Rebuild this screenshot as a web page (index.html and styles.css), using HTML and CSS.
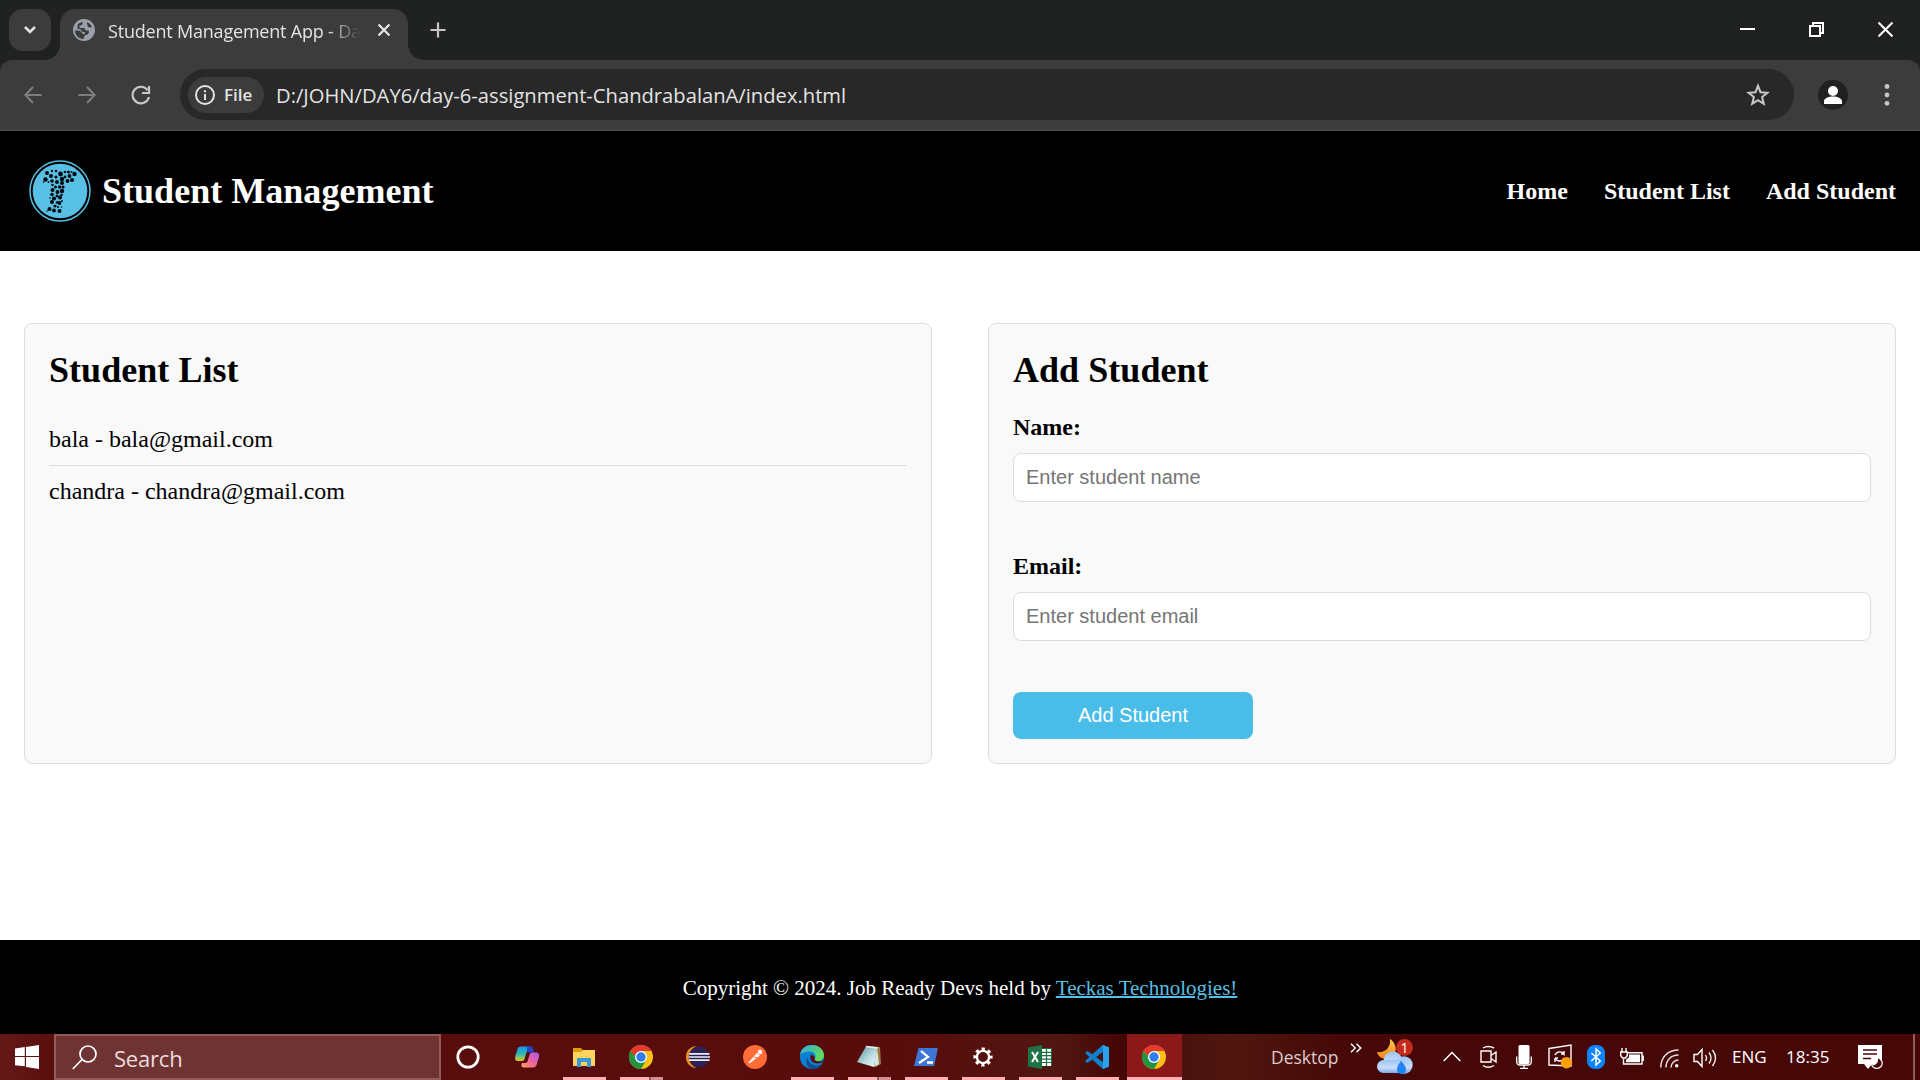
FILE: index.html
```
<!DOCTYPE html>
<html lang="en">
<head>
<meta charset="utf-8">
<title>Student Management App</title>
<link rel="stylesheet" href="styles.css">
</head>
<body>
<svg class="defs" aria-hidden="true">
  <defs>
    <symbol id="chrome" viewBox="0 0 24 24">
      <circle cx="12" cy="12" r="12" fill="#fbc116"/>
      <path d="M12 12 1.6 6A12 12 0 0 1 22.4 6H12Z" fill="#e33b2e"/>
      <path d="M1.6 6A12 12 0 0 0 12 24L17.2 15 6.8 15Z" fill="#229342"/>
      <path d="M1.6 6 6.8 15 12 12V6Z" fill="#229342"/>
      <path d="M1.6 6A12 12 0 0 1 22.4 6H12A6 6 0 0 0 6.3 10.5L4 9.2Z" fill="#e33b2e"/>
      <circle cx="12" cy="12" r="6" fill="#fff"/><circle cx="12" cy="12" r="4.7" fill="#2f7cf0"/>
    </symbol>
    <linearGradient id="copA" x1="0" y1="0" x2="0" y2="1"><stop offset="0" stop-color="#1a93ee"/><stop offset=".5" stop-color="#28b8b0"/><stop offset="1" stop-color="#e8c728"/></linearGradient>
    <linearGradient id="copB" x1="1" y1="0" x2="0" y2="1"><stop offset="0" stop-color="#a05df0"/><stop offset=".5" stop-color="#ee609e"/><stop offset="1" stop-color="#ffa45c"/></linearGradient>
    <linearGradient id="edgeA" x1="0" y1="0" x2="1" y2=".5"><stop offset="0" stop-color="#2fa9e6"/><stop offset="1" stop-color="#61dc56"/></linearGradient>
    <linearGradient id="cloud" x1="0" y1="0" x2="0" y2="1"><stop offset="0" stop-color="#9cc5fa"/><stop offset=".6" stop-color="#c9dcf6"/><stop offset="1" stop-color="#7fa9ec"/></linearGradient>
    <linearGradient id="moon" x1="0" y1="0" x2="0" y2="1"><stop offset="0" stop-color="#ffc94a"/><stop offset="1" stop-color="#ef8418"/></linearGradient>
    <linearGradient id="note" x1="0" y1="0" x2="1" y2="1"><stop offset="0" stop-color="#4e8d98"/><stop offset=".6" stop-color="#bfe0e4"/><stop offset="1" stop-color="#eef7f7"/></linearGradient>
  </defs>
</svg>

<div class="screen">
  <div class="tabstrip">
    <div class="tab-search"><svg width="14" height="10" viewBox="0 0 14 10"><path d="M2 2l5 5 5-5" fill="none" stroke="#e3e3e3" stroke-width="2.6"/></svg></div>
    <div class="tab">
      <svg class="globe" width="22" height="22" viewBox="0 0 22 22"><circle cx="11" cy="11" r="11" fill="#9aa0a9"/><path d="M10 3.500C9.500 6 8 6.500 6.500 6.500V9h4c1.500 0 2 1 1.800 2.500h3.500c.6 3-1 4.500-3.300 4.500-1 0-1 1.500-2 4C5.500 20 2 16 2 11.500c2 0 4.500 0 5.500.8 1.500 1 1 2.700 3.500 2.700 1.500 0 1-1.500.5-2H9.500L7 10H4.500V6C6 4 8 3 10 3.500ZM14 3c2.500 1 4.500 3 5 5.500-1.500-.8-3 .3-4-.5s.2-2-1-3Z" fill="#3c3c3c"/></svg>
      <span class="tab-title">Student Management App - Day</span>
      <svg width="14" height="14" viewBox="0 0 14 14"><path d="M1.500 1.500l11 11M12.500 1.500l-11 11" stroke="#e3e3e3" stroke-width="2.300"/></svg>
    </div>
    <svg class="new-tab" width="16" height="16" viewBox="0 0 16 16"><path d="M8 .5v15M.5 8h15" stroke="#c7c7c7" stroke-width="2.200"/></svg>
    <div class="window-buttons">
      <svg width="15" height="15" viewBox="0 0 15 15"><path d="M0 7h15" stroke="#fff" stroke-width="2"/></svg>
      <svg width="15" height="15" viewBox="0 0 15 15"><path d="M1 4h10v10H1ZM4 4V1h10v10h-3" fill="none" stroke="#fff" stroke-width="2"/></svg>
      <svg width="15" height="15" viewBox="0 0 15 15"><path d="M.5 .5l14 14M14.500 .5l-14 14" stroke="#fff" stroke-width="2"/></svg>
    </div>
  </div>

  <div class="toolbar">
    <svg width="18" height="18" viewBox="0 0 18 18"><path d="M17.500 9H1.500M9 1L1.300 9 9 17" fill="none" stroke="#7f7f7f" stroke-width="2"/></svg>
    <svg width="18" height="18" viewBox="0 0 18 18"><path d="M.5 9h16M9 1l7.700 8L9 17" fill="none" stroke="#7f7f7f" stroke-width="2"/></svg>
    <svg width="20" height="20" viewBox="0 0 20 20"><path d="M16.500 5A8.300 8.300 0 1 0 18 12" fill="none" stroke="#c7c7c7" stroke-width="2.200"/><path d="M18 1v7h-7" fill="none" stroke="#c7c7c7" stroke-width="2.200"/></svg>
    <div class="omnibox">
      <div class="chip"><svg width="20" height="20" viewBox="0 0 20 20"><circle cx="10" cy="10" r="9" fill="none" stroke="#e3e3e3" stroke-width="2"/><path d="M10 9v6M10 5.200v2" stroke="#e3e3e3" stroke-width="2"/></svg><span>File</span></div>
      <span class="url">D:/JOHN/DAY6/day-6-assignment-ChandrabalanA/index.html</span>
      <svg class="star" width="24" height="24" viewBox="0 0 24 24"><path d="M12 2.800l2.500 6.400 6.900 .5-5.300 4.400 1.700 6.800L12 17.200l-5.800 3.700 1.700-6.800L2.600 9.700l6.900-.5Z" fill="none" stroke="#c7c7c7" stroke-width="2"/></svg>
    </div>
    <svg class="profile" width="30" height="30" viewBox="0 0 30 30"><circle cx="15" cy="15" r="15" fill="#1f2120"/><circle cx="15" cy="11" r="5" fill="#fff"/><path d="M6 24v-2.500c0-3.500 4.500-5 9-5s9 1.500 9 5V24Z" fill="#fff"/></svg>
    <svg width="6" height="22" viewBox="0 0 6 22"><g fill="#c7c7c7"><circle cx="3" cy="2.500" r="2.400"/><circle cx="3" cy="11" r="2.400"/><circle cx="3" cy="19.300" r="2.400"/></g></svg>
  </div>

  <header class="site-header">
    <svg class="logo" width="62" height="62" viewBox="0 0 62 62">
      <circle cx="31" cy="31" r="30" fill="none" stroke="#58bfe5" stroke-width="1.500"/><circle cx="31" cy="31" r="27.300" fill="#58bfe5"/>
      <g fill="#05090c"><circle cx="18" cy="13" r="2"/><circle cx="23" cy="11" r="1.200"/><circle cx="27" cy="11" r="1.300"/><circle cx="31.500" cy="14" r="2.400"/><circle cx="36" cy="12" r="1.300"/><circle cx="39.500" cy="12" r="1.500"/><circle cx="42.500" cy="12" r="1"/><circle cx="45.500" cy="14" r="2.200"/><circle cx="22" cy="16" r="2"/><circle cx="16.500" cy="19.500" r="2.200"/><circle cx="27" cy="17" r="1.600"/><circle cx="36" cy="17" r="1.400"/><circle cx="40.500" cy="16" r="1.900"/><circle cx="43" cy="20" r="2"/><circle cx="38.500" cy="21" r="2"/><circle cx="33" cy="19" r="2.200"/><circle cx="23" cy="21" r="1.800"/><circle cx="28" cy="22" r="2"/><circle cx="33" cy="23" r="2"/><circle cx="14.500" cy="22" r=".8"/><circle cx="19.500" cy="22" r=".9"/><circle cx="23.500" cy="25" r="1.300"/><circle cx="26.500" cy="27" r="1.500"/><circle cx="30.500" cy="27" r="1.700"/><circle cx="34" cy="27" r="1.600"/><circle cx="23.500" cy="30" r="2"/><circle cx="28.500" cy="32" r="2"/><circle cx="33" cy="31" r="2.200"/><circle cx="23" cy="34.500" r="1.800"/><circle cx="28" cy="36" r="1.400"/><circle cx="32.500" cy="35" r="1.300"/><circle cx="25" cy="38.500" r="2.100"/><circle cx="31" cy="37.500" r="2"/><circle cx="21" cy="38" r=".8"/><circle cx="23" cy="42" r="2"/><circle cx="28" cy="42.500" r="1.300"/><circle cx="30.500" cy="43" r="1.900"/><circle cx="33" cy="41" r=".9"/><circle cx="26" cy="46" r="1.600"/><circle cx="20.500" cy="49" r="2"/><circle cx="25" cy="50.500" r="1.900"/><circle cx="30.500" cy="51" r="2"/><circle cx="29" cy="47" r="1.100"/><circle cx="32.500" cy="47" r=".7"/><circle cx="18" cy="51" r=".8"/></g>
    </svg>
    <h1>Student Management</h1>
    <nav><a>Home</a><a>Student List</a><a>Add Student</a></nav>
  </header>

  <main class="content">
    <section class="card">
      <h2>Student List</h2>
      <ul class="students"><li>bala - bala@gmail.com</li><li>chandra - chandra@gmail.com</li></ul>
    </section>
    <section class="card">
      <h2>Add Student</h2>
      <form>
        <label for="name">Name:</label><input id="name" type="text" placeholder="Enter student name">
        <label for="email">Email:</label><input id="email" type="email" placeholder="Enter student email">
        <button type="button">Add Student</button>
      </form>
    </section>
  </main>

  <footer class="site-footer"><p>Copyright © 2024. Job Ready Devs held by <a>Teckas Technologies!</a></p></footer>

  <div class="taskbar">
    <div class="start"><svg width="24" height="24" viewBox="0 0 24 24"><path d="M0 3.400l9.800-1.300V11H0ZM11 1.900L24 0v11H11ZM0 12h9.800v9.300L0 20.200ZM11 12h13v12l-13-2Z" fill="#fff"/></svg></div>
    <div class="search"><svg width="25" height="25" viewBox="0 0 25 25"><circle cx="16" cy="9" r="8" fill="none" stroke="#fff" stroke-width="1.700"/><path d="M10 14.500L.8 24" stroke="#fff" stroke-width="1.700"/></svg><span>Search</span></div>
    <div class="apps">
      <div class="app"><svg width="24" height="24" viewBox="0 0 24 24"><circle cx="12" cy="12" r="10.200" fill="none" stroke="#fff" stroke-width="2.800"/></svg></div>
      <div class="app"><svg width="26" height="24" viewBox="0 0 26 24"><path d="M7 1.500h9c2 0 3 1 2.500 3L18 6h-3c-2 0-2.500 1-3 3l-1.500 5c-.5 1.500-1.500 2-3 2H4C1 16 .7 13.500 1.400 11L3.500 4c.5-1.500 1.500-2.500 3.500-2.500Z" fill="url(#copA)"/><path d="M13 1.500h3c2 0 2.800 1 3.200 3l.8 3h-5c-2 0-2-1-2-2Z" fill="#2145c7"/><path d="M19 22.500h-9c-2 0-3-1-2.500-3L8 18h3c2 0 2.500-1 3-3l1.500-5C16 8.500 17 7.500 18.500 7.500H22c3 0 3.600 2.500 2.900 5L22.500 20c-.5 1.500-1.500 2.500-3.500 2.500Z" fill="url(#copB)"/></svg></div>
      <div class="app open"><svg width="24" height="24" viewBox="0 0 24 24"><path d="M1 3h8l2 2.500V8H1Z" fill="#dd9c08"/><path d="M1 7h8l2-2h12v16H1Z" fill="#ffd45c"/><path d="M5 22v-9h14v9h-4v-5H9v5Z" fill="#3a97dc"/></svg></div>
      <div class="app open stacked"><svg width="24" height="24"><use href="#chrome"/></svg></div>
      <div class="app"><svg width="26" height="24" viewBox="0 0 26 24"><path d="M12 1C5 1 1 6 1 12s4 11 11 11C7 21 5 17 5 12S7 3 12 1Z" fill="#f19020"/><circle cx="14" cy="12" r="10.500" fill="#2c2255"/><path d="M4 8.800h20.500M3.500 12h21.500M4 15.200h20.500" stroke="#eceaf6" stroke-width="1.700"/></svg></div>
      <div class="app"><svg width="24" height="24" viewBox="0 0 24 24"><circle cx="12" cy="12" r="12" fill="#ff6c37"/><path d="M6 18l8-9 2 1.500Z" fill="#fff" stroke="#fff" stroke-width="1.300"/><path d="M11 12l3 1" stroke="#ff6c37"/><circle cx="17" cy="7" r="2.200" fill="#fff"/></svg></div>
      <div class="app open"><svg width="24" height="24" viewBox="0 0 24 24"><circle cx="12" cy="12" r="12" fill="#0b80d5"/><path d="M0 10C1 3 6 0 12 0c7 0 12 5 12 10.500 0 3.500-2.800 5.500-6 5.500-2.500 0-4-.7-3-2 2-4-1-7.500-5.500-7.500C5 6.500 1.500 8 0 10Z" fill="url(#edgeA)"/><path d="M8 12c-.5 5 3.500 8.500 8.500 8.500 2 0 4-.6 5.500-1.500-2.500 4-7 5.300-10.500 5C6 22.500 5 16 8 12Z" fill="#114f94"/><path d="M11.500 9.500c-2 2-1.700 7 3 8.500 3 .9 6 .2 8.700-1.300.5-.3.700 0 .5.600l-1.800 2.500 2.300-.5V15c-2 1.800-5.500 2-8 1-2.500-1-2-2-1.200-3.500Z" fill="#5a0c0c"/></svg></div>
      <div class="app open stacked"><svg width="26" height="24" viewBox="0 0 26 24"><path d="M12 1l12 1 1 17-5 3Z" fill="#987c46"/><path d="M10 1.500l11 1.500-3 19L1 17Z" fill="url(#note)"/><path d="M21 3l2 16-5 3Z" fill="#d9e7e4"/><path d="M10 1.500l12 1.500" stroke="#e8eeee" stroke-width="1.500"/></svg></div>
      <div class="app open"><svg width="24" height="24" viewBox="0 0 24 24"><path d="M4.500 3H24l-4 18H0Z" fill="#3d75d6"/><path d="M7 6l7 6-9 6M13 17.500h6" fill="none" stroke="#fff" stroke-width="2.300"/></svg></div>
      <div class="app open"><svg width="24" height="24" viewBox="0 0 24 24"><circle cx="12" cy="12" r="8" fill="none" stroke="#fff" stroke-width="3.200" stroke-dasharray="3.140" stroke-dashoffset="1.570"/><circle cx="12" cy="12" r="6.100" fill="none" stroke="#fff" stroke-width="2.400"/></svg></div>
      <div class="app open"><svg width="24" height="24" viewBox="0 0 24 24"><path d="M12 3h12v18H12Z" fill="#1c6b41"/><path d="M14 4h9v17h-9Z" fill="#fff"/><path d="M14 7.300h9M14 10.700h9M14 14.100h9M14 17.500h9M18.500 4v17" stroke="#1c6b41" stroke-width="1.200"/><path d="M0 2.500L14 0v24L0 21.500Z" fill="#1f7446"/><path d="M4 7l6 10M10 7L4 17" stroke="#fff" stroke-width="2"/></svg></div>
      <div class="app open"><svg width="24" height="24" viewBox="0 0 24 24"><path d="M18 0l6 2.500v19L18 24l-.8-.5L0 8l2-2 3.500 2L18 17V7L5.500 16 2 18l-2-2L17 .5Z" fill="#1180ca"/><path d="M18 0l6 2.500v19L18 24Z" fill="#29a3ec"/></svg></div>
      <div class="app active"><svg width="24" height="24"><use href="#chrome"/></svg></div>
    </div>
    <div class="tray">
      <span class="desktop">Desktop</span>
      <svg class="more" width="12" height="10" viewBox="0 0 12 10"><path d="M1 .8l4.200 4.200L1 9.200M6.500 .8L10.700 5 6.500 9.200" fill="none" stroke="#fff" stroke-width="1.500"/></svg>
      <div class="weather"><svg width="37" height="38" viewBox="0 0 37 38"><path d="M14 1c7 4 9 17-2 20C6 22 2 18 1 14c7 1 14-3 13-13Z" fill="url(#moon)"/><g fill="url(#cloud)"><circle cx="17" cy="23" r="9.500"/><circle cx="28" cy="27" r="8.700"/><rect x="1" y="22" width="32" height="13" rx="6.500"/></g><path d="M25 23c3 3 5 6 5 8.500 0 6-9 6-9 0 0-3 2-6 4-8.500Z" fill="#1b85f3"/></svg><b class="badge">1</b></div>
      <svg class="caret" width="18" height="11" viewBox="0 0 18 11"><path d="M.7 10L9 1.500l8.300 8.500" fill="none" stroke="#fff" stroke-width="1.500"/></svg>
      <svg class="meet" width="18" height="24" viewBox="0 0 18 24"><path d="M3 3Q8 0 14 3M3 20.500Q8 24 14 20.500M1 6h10v11H1ZM11 10.500l5-3.500v10l-5-3.500" fill="none" stroke="#fff" stroke-width="1.400"/></svg>
      <svg class="mic" width="16" height="24" viewBox="0 0 16 24"><rect x="2.500" width="11" height="19" rx="1.500" fill="#fff"/><path d="M.7 11.500v5c0 2 1.500 3.500 3.500 3.500h7.600c2 0 3.500-1.500 3.500-3.500v-5M8 20v3M4 23.300h8" fill="none" stroke="#fff" stroke-width="1.300"/></svg>
      <svg class="update" width="25" height="26" viewBox="0 0 25 26"><path d="M1 4.500L23 1v21L1 21Z" fill="none" stroke="#fff" stroke-width="1.400"/><path d="M7 11c2-4 7-4 9-1v-3M16 10h-3M16 14c-2 4-7 4-9 0v4M7 14h3" fill="none" stroke="#fff" stroke-width="1.400"/><circle cx="18.500" cy="18.800" r="5.700" fill="#ff9f0a"/></svg>
      <svg class="bluetooth" width="18" height="24" viewBox="0 0 18 24"><rect width="18" height="24" rx="8" fill="#0a84ff"/><path d="M4.300 8l9 8L9 20V4l4.300 4-9 8" fill="none" stroke="#fff" stroke-width="1.500"/></svg>
      <svg class="battery" width="24" height="17" viewBox="0 0 24 17"><path d="M8 4.700h14v11.300H3.500V11M23.200 7.500V13" fill="none" stroke="#fff" stroke-width="1.400"/><path d="M9 6.500h11v7.700H6v-2.500l3-2.500Z" fill="#fff"/><path d="M2 0v4M6 0v4M.7 4h6.600v3.500L5.500 10h-3L.7 7.500Z" fill="none" stroke="#fff" stroke-width="1.400"/></svg>
      <svg class="wifi" width="19" height="19" viewBox="0 0 19 19"><g fill="none" stroke="#e6dede" stroke-width="1.500"><path d="M.8 18.500C1 8 8 1 18.500 1"/><path d="M6 18.500C6 11 11 6 18.500 6"/><path d="M11 18.500c0-4 3.500-7.500 7.500-7.500"/></g><circle cx="16.700" cy="16.700" r="1.700" fill="#fff"/></svg>
      <svg class="volume" width="24" height="20" viewBox="0 0 24 20"><path d="M1 6.500h3.500L9 1.500v17l-4.500-5H1Z" fill="none" stroke="#fff" stroke-width="1.400"/><path d="M12.500 7q2 3 0 6M16 4.500q4 5.500 0 11M19.500 2q6 8 0 16" fill="none" stroke="#fff" stroke-width="1.300"/></svg>
      <span class="lang">ENG</span>
      <span class="clock">18:35</span>
      <svg class="notice" width="25" height="25" viewBox="0 0 25 25"><path d="M0 0h24v19H14l-4 5-4-5H0Z" fill="#fff"/><path d="M5 5h14M5 9h14M5 13.500h8" stroke="#470707" stroke-width="1.500"/><path d="M19 12.500c1.500 4.500-1 7.500-5.500 7.500 2 4 7 4.500 9.500 1.500s1-8-4-9Z" fill="#470707" stroke="#fff" stroke-width="1.200"/></svg>
    </div>
  </div>
</div>
</body>
</html>
```

FILE: styles.css
```
* { box-sizing: border-box; }
body { margin: 0; font-family: "Liberation Serif", "Times New Roman", serif; color: #000; background: #fff; }
svg { display: block; flex: none; }
.defs { position: absolute; width: 0; height: 0; }
.screen { width: 1920px; height: 1080px; display: flex; flex-direction: column; overflow: hidden; }

/* Browser frame */
.tabstrip { flex: none; height: 60px; display: flex; background: #202221; font-family: "Open Sans", sans-serif; }
.tab-search { width: 42px; height: 42px; margin: 9px 9px 0; border-radius: 14px; background: #3c3c3c; display: grid; place-items: center; }
.tab { position: relative; width: 348px; height: 51px; margin-top: 9px; padding: 0 17px 9px 13px; display: flex; align-items: center; border-radius: 15px 15px 0 0; background: #3c3c3c; }
.tab::before, .tab::after { content: ""; position: absolute; bottom: 0; width: 15px; height: 15px; }
.tab::before { left: -15px; background: radial-gradient(circle at 0 0, transparent 14.5px, #3c3c3c 15px); }
.tab::after { right: -15px; background: radial-gradient(circle at 100% 0, transparent 14.5px, #3c3c3c 15px); }
.tab-title { width: 255px; margin: 2px 14px 0 13px; overflow: hidden; white-space: nowrap; font-size: 18px; line-height: 26px; letter-spacing: -0.2px; color: #e3e3e3; mask-image: linear-gradient(90deg, #000 86%, transparent 99%); }
.new-tab { margin: 22px 0 0 22px; }
.window-buttons { display: flex; gap: 54px; margin: 22px 27px 0 auto; }
.toolbar { flex: none; height: 71px; padding: 9px 30px 9px 24px; display: flex; align-items: flex-start; border-bottom: 2px solid #484848; background: #3c3c3c; border-radius: 12px 12px 0 0; box-shadow: 0 -12px 0 #202221; font-family: "Open Sans", sans-serif; }
.tabstrip { position: relative; z-index: 1; }
.toolbar > svg { margin: 17px 36px 0 0; }
.toolbar > svg:nth-child(3) { margin: 16px 29px 0 -1px; }
.toolbar > .profile { margin: 11px 36px 0 24px; }
.toolbar > svg:last-child { margin: 15px 0 0; }
.omnibox { flex: 1; height: 51px; padding: 0 24px 0 8px; display: flex; align-items: center; border-radius: 26px; background: #282828; }
.chip { width: 76px; height: 36px; padding-left: 7px; display: flex; align-items: center; gap: 9px; border-radius: 18px; background: #3c3c3c; color: #e3e3e3; font-size: 17px; font-weight: 600; }
.url { margin-left: 12px; color: #e3e3e3; font-size: 20.2px; white-space: nowrap; }
.star { margin-left: auto; }

/* Site */
.site-header { flex: none; height: 120px; padding: 0 24px 0 29px; display: flex; align-items: center; background: #000; color: #fff; }
.site-header h1 { margin: 0 auto 0 11px; font-size: 36px; line-height: 42px; letter-spacing: 0.03px; }
.site-header nav { display: flex; gap: 36px; font-size: 24px; font-weight: bold; }
.content { flex: 1; padding: 72px 24px 0; display: grid; grid-template-columns: 1fr 1fr; grid-template-rows: 441px; gap: 56px; }
.card { padding: 25px 24px 24px; border: 1px solid #ddd; border-radius: 8px; background: #f9f9f9; }
.card h2 { margin: 0; font-size: 36px; line-height: 42px; letter-spacing: 0.05px; }
.students { margin: 23px 0 0; padding: 0; list-style: none; font-size: 24px; line-height: 27px; }
.students li { padding: 12px 0; }
.students li:first-child { border-bottom: 1px solid #ddd; }
form { display: flex; flex-direction: column; align-items: flex-start; padding-top: 23px; }
label { font-size: 24px; font-weight: bold; line-height: 27px; margin-bottom: 12px; }
input { width: 100%; height: 49px; margin: 0 0 51px; padding: 0 12px; border: 1px solid #ddd; border-radius: 8px; background: #fff; font: 20px "Liberation Sans", Arial, sans-serif; }
input::placeholder { color: #757575; }
button { width: 240px; height: 47px; padding: 0; border: 0; border-radius: 8px; background: #49bde8; color: #fff; font: 20px "Liberation Sans", Arial, sans-serif; }
.site-footer { flex: none; height: 94px; padding-top: 2px; display: grid; place-items: center; background: #000; color: #fff; }
.site-footer p { margin: 0; font-size: 21px; line-height: 24px; }
.site-footer a { color: #58bfe5; text-decoration: underline; text-decoration-thickness: 2px; }

/* Taskbar */
.taskbar { flex: none; height: 46px; display: flex; font-family: "Open Sans", sans-serif; color: #fff; background: linear-gradient(90deg, #651818 0, #580d0d 60px, #590c0c 900px, #501711 1060px, #450505 1120px, #4a120e 1185px, #50170f 1230px, #450707 1350px, #470707 100%); }
.start { width: 54px; display: grid; place-items: center; }
.search { width: 387px; padding-left: 16px; display: flex; align-items: center; gap: 17px; border: 2px solid #925b5b; background: #703333; color: #ecdede; font-size: 22px; }
.search span { padding-top: 1px; letter-spacing: -0.2px; }
.apps { display: flex; padding-left: 1px; }
.app { width: 57px; height: 46px; padding-right: 1px; display: grid; place-items: center; position: relative; }
.app:first-child { width: 56px; padding-right: 4px; }
.app:nth-child(2) { width: 58px; }
.app.open::after, .app.active::after { content: ""; position: absolute; left: 7px; bottom: 0; width: 43px; height: 3px; background: #ffb0b4; }
.app.stacked::after { background: linear-gradient(90deg, #ffb0b4 29px, #8c5d5f 29px, #8c5d5f 31px, #cf8f92 31px); }
.app.active { width: 55px; margin-left: 1px; background: #8b1919; }
.app.active::after { left: 0; width: 55px; }
.tray { flex: 1; display: flex; align-items: flex-start; border-right: 2px solid #925b5b; margin-right: 5px; font-size: 18px; line-height: 24px; white-space: nowrap; }
.desktop { width: 69px; margin: 11px 0 0 89px; color: #dccccc; font-size: 17.5px; }
.more { margin: 9px 0 0 10px; }
.weather { position: relative; margin: 4px 0 0 14px; }
.badge { position: absolute; left: 20px; top: 1px; width: 17px; height: 17px; border-radius: 50%; background: #c42b1c; font-size: 14px; font-weight: 400; line-height: 17px; text-align: center; }
.caret { margin: 17px 0 0 30px; }
.meet { margin: 11px 0 0 19px; }
.mic { margin: 11px 0 0 18px; }
.update { margin: 10px 0 0 16px; }
.bluetooth { margin: 11px 0 0 14px; }
.battery { margin: 14px 0 0 15px; }
.wifi { margin: 15px 0 0 16px; }
.volume { margin: 14px 0 0 14px; }
.lang { width: 34px; margin: 11px 0 0 15px; font-size: 17px; }
.clock { width: 44px; margin: 11px 0 0 20px; font-size: 17px; }
.notice { margin: 11px 0 0 28px; }
```
